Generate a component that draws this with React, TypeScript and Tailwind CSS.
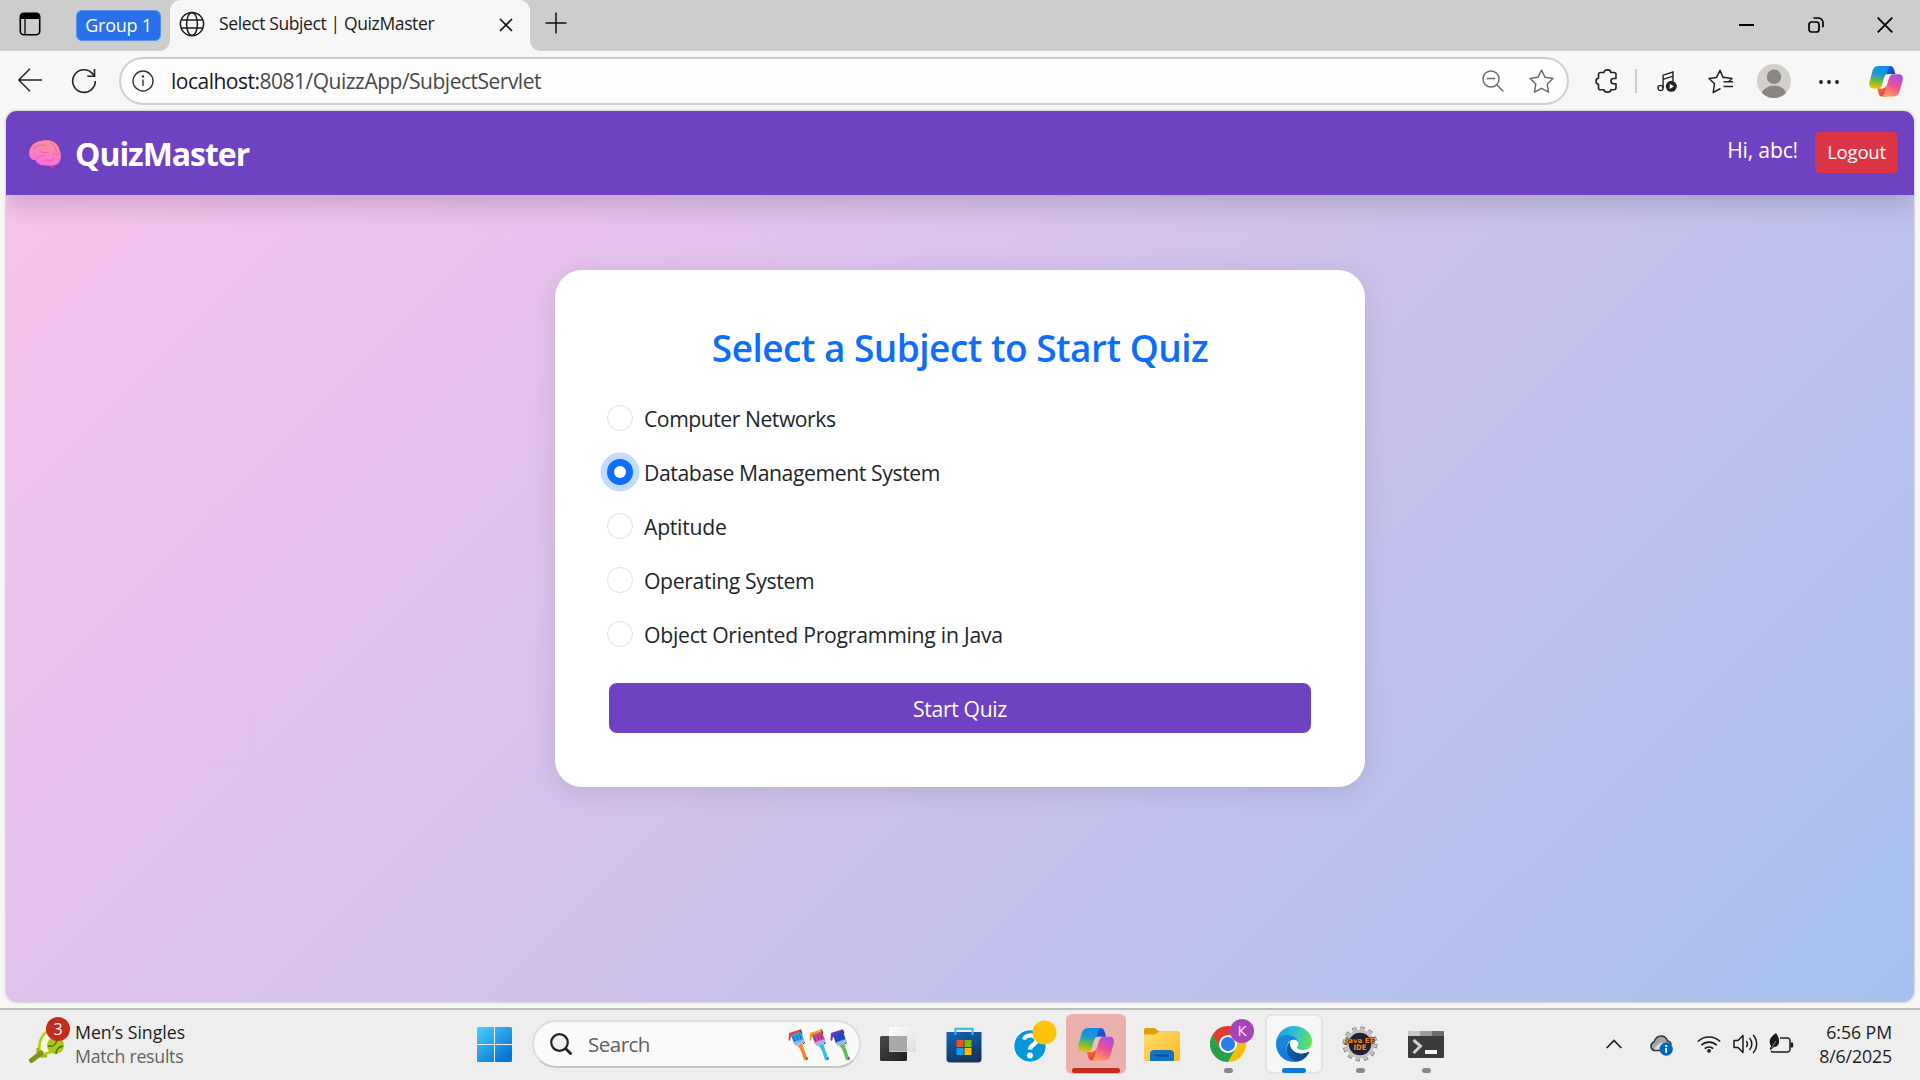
import React from "react";

type SvgProps = { className?: string };

function CopilotIcon({ className = "w-[35px] h-[32px]", id, gap }: SvgProps & { id: string; gap: string }) {
  return (
    <svg viewBox="0 0 36 33" className={className}>
      <defs>
        <linearGradient id={id + "a"} x1="0.4" y1="0" x2="0.2" y2="1">
          <stop offset="0" stopColor="#0f8fe8" />
          <stop offset="0.35" stopColor="#1a9bd0" />
          <stop offset="0.65" stopColor="#6fbb3c" />
          <stop offset="1" stopColor="#f5c400" />
        </linearGradient>
        <linearGradient id={id + "b"} x1="0.8" y1="0" x2="0.3" y2="1">
          <stop offset="0" stopColor="#a34dea" />
          <stop offset="0.5" stopColor="#ee5091" />
          <stop offset="1" stopColor="#ffa25c" />
        </linearGradient>
        <linearGradient id={id + "c"} x1="0" y1="0" x2="1" y2="1">
          <stop offset="0" stopColor="#1565dd" />
          <stop offset="1" stopColor="#1b3fc0" />
        </linearGradient>
        <linearGradient id={id + "d"} x1="0" y1="0" x2="0.6" y2="1">
          <stop offset="0" stopColor="#ff8a3c" />
          <stop offset="1" stopColor="#e8383d" />
        </linearGradient>
      </defs>
      <path d="M17 0h5.500c2.500 0 3.600 1.800 4.300 4.200L28 8.800h-5c-3 0-5 .5-6 2.500z" fill={`url(#${id}c)`} />
      <path d="M19 32.500h-5c-2.500 0-3.400-1.800-4-4l-1.300-4.700h4.600c3 0 4-1.500 5-4.500z" fill={`url(#${id}d)`} />
      <path d="M10.500 0H24c-2.800 0-3.700 2.500-4.600 5.500l-4 13.500c-1 3.200-2.600 5-5.500 5H4.700C.5 24-.7 20.500.5 16.300l3.300-11.500C4.800 1.500 7 0 10.500 0z" fill={`url(#${id}a)`} />
      <path d="M25.500 32.500H12.500c2.500 0 3.600-2.300 4.500-5.300l3.900-13.400c1-3.300 2.500-5 5.500-5h5.100c4.200 0 5.200 3.500 4 7.700l-3.300 11.200c-1 3.300-3.300 4.800-6.700 4.800z" fill={`url(#${id}b)`} />
      <path d="M18.500 8.800h5.500c-2 .5-2.900 2-3.500 4l-2.100 7c-.8 2.600-1.900 4-4.400 4.200h-3.500c1.700-.4 2.500-1.600 3.100-3.600l2.200-7.400c.5-1.900 1.300-3.500 2.700-4.200z" fill={gap} />
    </svg>
  );
}

function BrainIcon() {
  return (
    <svg viewBox="0 0 32 30" className="mt-[3px] h-[30px] w-[32px]">
      <defs>
        <linearGradient id="brain" x1="0.6" y1="0" x2="0.4" y2="1">
          <stop offset="0" stopColor="#ff8f95" />
          <stop offset="0.55" stopColor="#fb7fc0" />
          <stop offset="1" stopColor="#fb68e4" />
        </linearGradient>
      </defs>
      <path d="M20 24h5l-.3 4.500c-.6.700-1.600.4-2.200-.5z" fill="#e0358f" />
      <path d="M13.500.8C6.500 1 .4 6 .2 13c-.2 4.500 2.500 7 6.300 7.300 1.500 3.500 4.500 5 8 5 3.500.6 9 .7 12-.3 4-1.300 5.500-5.500 5.300-9.500C31.500 7 26 .300 18.500.300 16.500.200 15 .300 13.500.800z" fill="url(#brain)" />
      <path d="M4.500 9c3.500-4 7.500-5 12-3M10.500 10c2 3 6 3.500 9 2M21.500 2.500c3 2 5.500 5.500 6 9M7 19.500c1.500-3.500 5-4.500 8-3.500M18 20c3 1 6 0 8-2M24 13.500c2 1 4 1 6 0" fill="none" stroke="#e0568f" strokeOpacity="0.750" strokeWidth="0.900" strokeLinecap="round" />
    </svg>
  );
}

function TabStrip() {
  return (
    <div className="flex h-[51px] shrink-0 bg-[#cdcdcd]">
      <div className="flex w-[170px] items-center">
        <svg viewBox="0 0 22 24" className="ml-[19px] mb-[3px] h-[24px] w-[22px]">
          <rect x="1.300" y="1.300" width="19.400" height="21.400" rx="3.500" fill="none" stroke="#000" strokeWidth="1.600" />
          <path d="M1 7V4.500A3.500 3.500 0 0 1 4.500 1h13A3.500 3.500 0 0 1 21 4.500V7z" />
          <path d="M6 7v15.500" stroke="#000" strokeWidth="1.300" />
        </svg>
        <div className="ml-[35px] flex h-[31px] w-[85px] items-center justify-center rounded-[6px] border border-[#5a92f0] bg-[#2a70ec] text-[18px] tracking-[-0.27px] text-white">
          Group 1
        </div>
      </div>
      <div className="relative flex w-[360px] items-center rounded-t-[11px] bg-[#f7f7f7]">
        <span className="absolute bottom-0 -left-[10px] h-[10px] w-[10px] bg-[radial-gradient(circle_at_0_0,#cdcdcd_9.500px,#f7f7f7_10px)]" />
        <span className="absolute bottom-0 -right-[10px] h-[10px] w-[10px] bg-[radial-gradient(circle_at_100%_0,#cdcdcd_9.500px,#f7f7f7_10px)]" />
        <svg viewBox="0 0 26 26" className="mb-[3px] ml-[9px] h-[26px] w-[26px]" fill="none" stroke="#1b1b1b" strokeWidth="1.500">
          <circle cx="13" cy="13" r="11.600" />
          <ellipse cx="13" cy="13" rx="5.400" ry="11.600" />
          <path d="M2.300 9h21.400M2.300 17h21.400" />
        </svg>
        <span className="ml-[14px] pb-[4px] text-[17.5px] tracking-[-0.38px] whitespace-nowrap text-[#1b1b1b]">Select Subject | QuizMaster</span>
        <svg viewBox="0 0 14 14" className="mb-px ml-auto mr-[17px] h-[14px] w-[14px]" stroke="#111" strokeWidth="1.700">
          <path d="M1 1l12 12M13 1L1 13" />
        </svg>
      </div>
      <svg viewBox="0 0 22 22" className="mt-[12px] ml-[15px] h-[22px] w-[22px]" stroke="#111" strokeWidth="1.500">
        <path d="M11 .5v21M.5 11h21" />
      </svg>
      <div className="ml-auto flex items-center pr-[27px]">
        <span className="mb-px h-[2px] w-[15px] bg-black" />
        <svg viewBox="0 0 16 16" className="mb-px ml-[54px] h-[16px] w-[16px]" fill="none" stroke="#000" strokeWidth="1.700">
          <rect x="1" y="5" width="10" height="10" rx="2.500" />
          <path d="M5.500 1h4.800A4.700 4.700 0 0 1 15 5.700v4.500" />
        </svg>
        <svg viewBox="0 0 16 16" className="mb-px ml-[53px] h-[16px] w-[16px]" stroke="#000" strokeWidth="1.800">
          <path d="M.7.7l14.600 14.600M15.300.7L.7 15.300" />
        </svg>
      </div>
    </div>
  );
}

function AddressBar() {
  return (
    <div className="flex h-[60px] shrink-0 items-center bg-[#f7f7f7]">
      <svg viewBox="0 0 24 24" className="ml-[18px] mb-[2px] h-[24px] w-[24px]" fill="none" stroke="#222" strokeWidth="1.500">
        <path d="M24 12H1M12 .8L.8 12 12 23.200" />
      </svg>
      <svg viewBox="0 0 26 26" className="ml-[29px] h-[26px] w-[26px]" fill="none" stroke="#222" strokeWidth="1.600">
        <path d="M24.300 13A11.300 11.300 0 1 1 21.300 5.400L23.300 7.800" />
        <path d="M23.500 1v7.200h-7.200" />
      </svg>
      <div className="ml-[22px] flex h-[48px] w-[1450px] items-center rounded-full border-2 border-[#cfcfcf] bg-[#fdfdfd]">
        <svg viewBox="0 0 22 22" className="ml-[11px] h-[22px] w-[22px]" fill="none" stroke="#333" strokeWidth="1.400">
          <circle cx="11" cy="11" r="10" />
          <path d="M11 9.500v6.500" />
          <circle cx="11" cy="6.500" r="0.600" fill="#333" />
        </svg>
        <span className="ml-[17px] pt-[1px] text-[21px] tracking-[-0.5px] text-[#484848]">
          <span className="text-[#1b1b1b]">localhost:</span>8081/QuizzApp/SubjectServlet
        </span>
        <svg viewBox="0 0 22 22" className="ml-auto h-[22px] w-[22px]" fill="none" stroke="#6a6a6a" strokeWidth="1.500">
          <circle cx="9" cy="9" r="8" />
          <path d="M5 8.500h8M14.700 14.700L21.500 21.500" />
        </svg>
        <svg viewBox="0 0 24 24" className="mr-[13px] ml-[25px] h-[25px] w-[25px]" fill="none" stroke="#6a6a6a" strokeWidth="1.400" strokeLinejoin="round">
          <path d="M12 1l3.400 7 7.600 1.100-5.500 5.400 1.300 7.700-6.800-3.600-6.800 3.600 1.300-7.700L1 9.100 8.600 8z" />
        </svg>
      </div>
      <svg viewBox="0 0 22 24" className="ml-[26px] h-[24px] w-[22px]" fill="none" stroke="#222" strokeWidth="1.600" strokeLinejoin="round">
        <path d="M5.500 3.500H9C9 1.800 10.200.9 12.500.9S15.800 1.800 15.800 3.500h3.300A2 2 0 0 1 21 5.500v4h-2.500a2.500 2.500 0 0 0 0 5.200H21v4a2 2 0 0 1-1.900 2h-3.300c0 1.600-1.200 2.400-3.300 2.400S9 22.300 9 20.700H5.500a2 2 0 0 1-2-2v-3.500C1.800 15 1 13.900 1 12.200s.8-2.900 2.500-3.100V5.500a2 2 0 0 1 2-2z" />
      </svg>
      <span className="ml-[18px] h-[24px] w-[2px] bg-[#cfcfcf]" />
      <svg viewBox="0 0 20 21" className="ml-[20px] h-[21px] w-[20px]" fill="none" stroke="#222" strokeWidth="1.400">
        <circle cx="3.500" cy="17" r="2.600" />
        <path d="M6.100 17V4.200L16 1v9M6.100 8.400L16 5.200" />
        <circle cx="14.300" cy="15.300" r="5.500" fill="#222" stroke="none" />
        <path d="M12.700 12.700v5.200l4.200-2.600z" fill="#fff" stroke="none" />
      </svg>
      <svg viewBox="0 0 25 25" className="ml-[31px] h-[25px] w-[25px]" fill="none" stroke="#222" strokeWidth="1.500" strokeLinejoin="round">
        <path d="M17 8.800l-2-.4-3-7-3.400 7L1 9.500l5.500 5.200L5.200 23.500 12.500 19.500M15.500 8.200l8.500 1.300-3 2.700M15.500 12.700H25M15.500 17.500H25" />
      </svg>
      <svg viewBox="0 0 34 34" className="ml-[24px] h-[34px] w-[34px]">
        <clipPath id="avatar"><circle cx="17" cy="17" r="17" /></clipPath>
        <g clipPath="url(#avatar)">
          <rect width="34" height="34" fill="#d2d0cd" />
          <circle cx="17" cy="12.800" r="7.200" fill="#8a8683" />
          <ellipse cx="17" cy="31.500" rx="12.500" ry="10" fill="#8a8683" />
        </g>
      </svg>
      <svg viewBox="0 0 20 4" className="ml-[28px] mt-px h-[4px] w-[20px]" fill="#222">
        <circle cx="2" cy="2" r="1.900" /><circle cx="10" cy="2" r="1.900" /><circle cx="18" cy="2" r="1.900" />
      </svg>
      <CopilotIcon id="toolbar" gap="#f7f7f7" className="ml-[30px] h-[31px] w-[34px]" />
    </div>
  );
}

const subjects = [
  { name: "Computer Networks", track: "tracking-[-0.48px]", selected: false },
  { name: "Database Management System", track: "tracking-[-0.41px]", selected: true },
  { name: "Aptitude", track: "tracking-[-0.27px]", selected: false },
  { name: "Operating System", track: "tracking-[-0.36px]", selected: false },
  { name: "Object Oriented Programming in Java", track: "tracking-[-0.25px]", selected: false },
];

function QuizPage() {
  return (
    <div className="mx-[6px] flex h-[891px] shrink-0 flex-col overflow-hidden rounded-[11px] bg-[linear-gradient(135deg,#fbc2eb_0%,#a6c1ee_100%)] shadow-[0_0_3px_rgba(0,0,0,0.3)]">
      <nav className="flex h-[84px] shrink-0 items-center bg-[#6f42c1] pr-[16px] pl-[23px] shadow-[0_11px_22px_rgba(0,0,0,0.15)]">
        <BrainIcon />
        <span className="ml-[14px] pt-[2px] text-[32px] font-bold tracking-[-1.05px] text-white">QuizMaster</span>
        <span className="ml-auto pb-[7px] text-[21.2px] tracking-[-0.2px] text-white">Hi, abc!</span>
        <span className="mb-[2px] ml-[17px] flex h-[41px] w-[83px] items-center justify-center rounded-[5px] bg-[#dc3545] text-[18.6px] tracking-[-0.25px] text-white">Logout</span>
      </nav>
      <main className="mx-auto mt-[75px] flex h-[517px] w-[810px] flex-col rounded-[27px] bg-white px-[54px] shadow-[0_5px_27px_rgba(0,0,0,0.1)]">
        <h3 className="mt-[53px] text-center text-[37px] leading-[50px] font-semibold tracking-[-0.53px] whitespace-nowrap text-[#0d6efd]">
          Select a Subject to Start Quiz
        </h3>
        <div className="mt-[18px]">
          {subjects.map((s) => (
            <label key={s.name} className="flex h-[54px] items-center">
              {s.selected ? (
                <span className="-ml-[2px] flex h-[26px] w-[26px] items-center justify-center rounded-full bg-[#0d6efd] shadow-[0_0_0_6.5px_#c2dbfe]">
                  <span className="h-[12px] w-[12px] rounded-full bg-white" />
                </span>
              ) : (
                <span className="-ml-[2px] h-[26px] w-[26px] rounded-full border border-[#dee2e6] bg-white" />
              )}
              <span className={"ml-[11px] pt-[2px] text-[21.2px] text-[#212529] " + s.track}>{s.name}</span>
            </label>
          ))}
        </div>
        <button className="mt-[22px] h-[50px] w-full rounded-[8px] bg-[#6f42c1] pt-px text-[21.2px] tracking-[-0.35px] text-white">Start Quiz</button>
      </main>
    </div>
  );
}

function Racket() {
  return (
    <svg viewBox="0 0 36 36" className="h-[36px] w-[36px]">
      <path d="M11 25C8 14 14 4 22 2c9-2 12 8 7 16-3 5-9 7-14 8z" fill="#f5f7e0" stroke="#bccb12" strokeWidth="2.600" />
      <path d="M9 20v8h9" fill="none" stroke="#a3b40c" strokeWidth="3" />
      <path d="M2.500 32.500L12 25" stroke="#7f9413" strokeWidth="5" strokeLinecap="round" />
      <circle cx="26.500" cy="17.500" r="8.500" fill="#a9c80e" />
      <path d="M19 18c5 1 9-1 9-9M27 26c0-4 2-7 7-8" fill="none" stroke="#4d6b12" strokeWidth="1.300" />
    </svg>
  );
}

function Brush({ tip, bristle, handle }: { tip: string; bristle: string; handle: string }) {
  return (
    <svg viewBox="0 0 20 32" className="h-[32px] w-[20px]">
      <path d="M1 4L12 .5l2 3.500L3 8 2 12 .5 11z" fill={tip} />
      <path d="M3 6l10-3.500 3 8.500-10 4z" fill={bristle} />
      <path d="M5 7l1.500 5M8.500 6l1.500 5M11.500 5l1.500 5" stroke="#1c3f8c" strokeWidth="0.800" />
      <path d="M5.800 13.500l10-3.500 1 3.500-9.500 3.500z" fill="#9fb6ee" />
      <path d="M9 16.500l5.500-2c0 3 4 11 4.500 15 0 2-2.500 2.500-3.500.5-1-3.500-2.500-11-6.500-13.500z" fill={handle} />
      <path d="M12.500.500l1.500 4M16.800 13.500l-2 1.500M19 28v3" stroke="#222" strokeWidth="1" />
    </svg>
  );
}

function Slot({ children, dot = false }: { children: React.ReactNode; dot?: boolean }) {
  return (
    <div className="relative flex h-[70px] w-[66px] items-center justify-center pb-[2px]">
      {children}
      {dot && <span className="absolute bottom-[7px] left-[29px] h-[5px] w-[9px] rounded-full bg-[#888]" />}
    </div>
  );
}

function TaskbarApps() {
  return (
    <div className="ml-[4px] flex">
      <Slot>
        <svg viewBox="0 0 36 34" className="h-[34px] w-[36px]">
          <defs>
            <linearGradient id="tv1" x1="0" y1="0" x2="1" y2="1"><stop stopColor="#4a4a4a" /><stop offset="1" stopColor="#1d1d1d" /></linearGradient>
            <linearGradient id="tv2" x1="0" y1="0" x2="1" y2="1"><stop stopColor="#fff" /><stop offset="1" stopColor="#dedede" /></linearGradient>
          </defs>
          <rect x="0" y="9" width="27" height="25" rx="1.500" fill="url(#tv1)" />
          <rect x="9" y="0" width="27" height="25" rx="1.500" fill="url(#tv2)" />
          <path d="M9 9h18v15.500H9z" fill="#a9a9a9" />
        </svg>
      </Slot>
      <Slot>
        <svg viewBox="0 0 36 36" className="mt-px mr-px h-[36px] w-[36px]">
          <defs><linearGradient id="store" x1="0" y1="0" x2="0.400" y2="1"><stop stopColor="#0f66b8" /><stop offset="1" stopColor="#15375f" /></linearGradient></defs>
          <path d="M.5 5h35V32a3.500 3.500 0 0 1-3.500 3.500H4A3.500 3.500 0 0 1 .5 32z" fill="url(#store)" />
          <path d="M9.500 8V1.800h17V8" fill="none" stroke="#35b8f1" strokeWidth="2" />
          <path d="M10.500 13h7v7h-7z" fill="#f25022" /><path d="M18.500 13h7v7h-7z" fill="#7fba00" />
          <path d="M10.500 21h7v7h-7z" fill="#00a4ef" /><path d="M18.500 21h7v7h-7z" fill="#ffb900" />
        </svg>
      </Slot>
      <Slot>
        <svg viewBox="0 0 44 44" className="mb-[5px] ml-[9px] h-[44px] w-[44px]">
          <circle cx="17" cy="26" r="16.300" fill="#0598d8" stroke="#fff" strokeWidth="1.200" />
          <path d="M11 19.500c1-5 11.500-6 12.500.3.600 5-6.500 4.700-6.500 9.700" fill="none" stroke="#fff" strokeWidth="4.300" />
          <circle cx="17" cy="35.500" r="2.900" fill="#fff" />
          <circle cx="31.500" cy="12.500" r="12" fill="#ffc20e" />
        </svg>
      </Slot>
      <Slot>
        <div className="relative flex h-[60px] w-[60px] items-center justify-center rounded-[6px] bg-[#e9b0ac]">
          <CopilotIcon id="taskbar" gap="#ecc2bf" className="h-[33px] w-[36px]" />
          <span className="absolute bottom-px left-[6px] h-[5px] w-[48px] rounded-full bg-[#c42b1c]" />
        </div>
      </Slot>
      <Slot>
        <svg viewBox="0 0 36 33" className="h-[33px] w-[36px]">
          <defs><linearGradient id="folder" x1="0" y1="0" x2="1" y2="1"><stop stopColor="#ffdc70" /><stop offset="1" stopColor="#fbb91c" /></linearGradient></defs>
          <path d="M0 2a2 2 0 0 1 2-2h9l4 3.500H34a2 2 0 0 1 2 2V12H0z" fill="#dfa00c" />
          <path d="M0 6.500h11l4-2.500h21v27a2 2 0 0 1-2 2H2a2 2 0 0 1-2-2z" fill="url(#folder)" />
          <path d="M6 33v-7a4 4 0 0 1 4-4h16a4 4 0 0 1 4 4v7z" fill="#1272c6" />
          <path d="M11 27.500h14" stroke="#0b4d90" strokeWidth="2" />
        </svg>
      </Slot>
      <Slot dot>
        <svg viewBox="0 0 48 48" className="h-[36px] w-[36px]">
          <path d="M24 12h20.800A24 24 0 0 1 24 48l10.400-18z" fill="#fbbc05" />
          <path d="M3.200 12A24 24 0 0 1 44.800 12H24L13.600 30z" fill="#e33b2e" />
          <path d="M3.200 12L13.600 30 24 36l10.400-6L24 48A24 24 0 0 1 3.200 12z" fill="#28a04a" />
          <circle cx="24" cy="24" r="12" fill="#fff" />
          <circle cx="24" cy="24" r="9.500" fill="#2f7ced" />
        </svg>
        <span className="absolute top-[9px] left-[35px] flex h-[24px] w-[24px] items-center justify-center rounded-full bg-[#a745b8] font-['DejaVu_Sans'] text-[14px] text-[#f1dff4]">K</span>
      </Slot>
      <Slot>
        <div className="relative flex h-[60px] w-[58px] items-center justify-center rounded-[7px] border-2 border-[#e4e4e4] bg-[#f7f7f7]">
          <svg viewBox="0 0 36 36" className="h-[36px] w-[36px] shrink-0">
            <defs>
              <linearGradient id="edgeTop" x1="0" y1="0.400" x2="1" y2="0.600"><stop stopColor="#1a9de0" /><stop offset="0.500" stopColor="#2fc2d4" /><stop offset="1" stopColor="#67e34b" /></linearGradient>
              <linearGradient id="edgeLeft" x1="0.200" y1="0" x2="0.600" y2="1"><stop stopColor="#1b8ad8" /><stop offset="1" stopColor="#0a7be0" /></linearGradient>
              <linearGradient id="edgeDark" x1="0" y1="0.500" x2="1" y2="0.600"><stop stopColor="#0d5cab" /><stop offset="1" stopColor="#0c4a86" /></linearGradient>
            </defs>
            <path d="M0 17C.8 7 8.500 0 18 0c10.500 0 18 7.500 18 15.500 0 5.500-4 8.500-9 8.500-4 0-6.500-1-6.500-2.500 0-1 1.700-1.800 1.700-4.500C22.200 12.500 17 9 11 9 6 9 1.500 12 0 17z" fill="url(#edgeTop)" />
            <path d="M0 18C0 12 5 8.800 11 8.800c6.500 0 11.200 3.700 11.200 8.200-1-2.500-3-3.300-4.700-3.300-4 0-7 4.300-7 9.300 0 6 4 11 9.500 12.900C8 37 0 28 0 18z" fill="url(#edgeLeft)" />
            <path d="M15 15c-3 2-4.500 5-4.500 8.500 0 6.500 5 12 10.500 12.200 5-.7 9.500-4 12-8.700.5-1-.3-1.500-1.200-1-5.500 3-17.300 1.500-17.300-7.500 0-1.300.2-2.500.5-3.500z" fill="url(#edgeDark)" />
            <path d="M13.800 18.300c0-2.800 1.800-4.500 4.200-4.500 2.800 0 4.600 2.200 4.300 4.500-.2 1.300-1.400 2-1.400 3.300 0 1.500 2.300 2.600 6 2.600 3 0 5.500-.7 7.500-2.400l-1.600 3.800c-4 2-9.500 2.300-13.500-.2-3-1.900-5.500-4.100-5.500-7.100z" fill="#f7f7f7" />
          </svg>
          <span className="absolute -bottom-[1px] left-[15px] h-[5px] w-[24px] rounded-full bg-[#0f7ad6]" />
        </div>
      </Slot>
      <Slot dot>
        <svg viewBox="0 0 36 36" className="h-[36px] w-[36px]">
          <circle cx="18" cy="18" r="15.500" fill="none" stroke="#777" strokeWidth="4" strokeDasharray="4.060 4.060" />
          <circle cx="18" cy="18" r="15.300" fill="none" stroke="#c4c4c4" strokeWidth="3" strokeDasharray="3 5.010" strokeDashoffset="-0.500" />
          <circle cx="18" cy="18" r="12.800" fill="#25202f" stroke="#c4c4c4" strokeWidth="3" />
          <text x="18" y="16.500" textAnchor="middle" fontSize="7" fontWeight="700" fill="#f58a1f" stroke="#1a1010" strokeWidth="1" paintOrder="stroke" fontFamily="DejaVu Sans" textLength="29" lengthAdjust="spacingAndGlyphs">Java EE</text>
          <text x="18" y="24" textAnchor="middle" fontSize="7.500" fontWeight="700" fill="#f58a1f" fontFamily="DejaVu Sans" textLength="13" lengthAdjust="spacingAndGlyphs">IDE</text>
        </svg>
      </Slot>
      <Slot dot>
        <svg viewBox="0 0 36 27" className="h-[27px] w-[36px]">
          <rect width="36" height="27" rx="1.500" fill="#3a3a3a" />
          <path d="M0 5V1.500A1.500 1.500 0 0 1 1.500 0H12v5z" fill="#c9c9c9" /><path d="M12 0h12v5H12z" fill="#9a9a9a" /><path d="M24 0h10.500A1.500 1.500 0 0 1 36 1.500V5H24z" fill="#6c6c6c" />
          <path d="M5.500 9l7 6-7 7" fill="none" stroke="#cfcfcf" strokeWidth="3" />
          <rect x="17" y="19" width="12" height="4" fill="#f2f2f2" />
        </svg>
      </Slot>
    </div>
  );
}

function Tray() {
  return (
    <div className="mr-[28px] mb-[2px] ml-auto flex items-center">
      <svg viewBox="0 0 16 10" className="h-[10px] w-[16px]" fill="none" stroke="#1b1b1b" strokeWidth="1.700"><path d="M.7 9L8 1.500 15.300 9" /></svg>
      <svg viewBox="0 0 24 21" className="ml-[27px] mt-[3px] h-[21px] w-[24px]">
        <path d="M5 15.500a4.500 4.500 0 0 1 0-8.500C6.500 3 9 1 12 1s5.500 1.500 6.500 5c2 .3 3.500 2 3.500 4" fill="#a6a6a6" stroke="#333" strokeWidth="1.500" />
        <path d="M5 15.500c1-4.500 5-7.500 9-8l-3 8z" fill="#dcdcdc" />
        <path d="M4.500 15.500h7" stroke="#333" strokeWidth="1.500" />
        <circle cx="17.200" cy="14.200" r="6.600" fill="#0067c0" />
        <path d="M17.200 13v4.800M17.200 10v2" stroke="#fff" strokeWidth="1.800" />
      </svg>
      <svg viewBox="0 0 24 18" className="ml-[24px] h-[18px] w-[24px]" fill="none" stroke="#1b1b1b" strokeWidth="1.600">
        <path d="M.8 6.500a16 16 0 0 1 22.400 0M4.300 10.300a11 11 0 0 1 15.400 0M7.700 13.700a6.200 6.200 0 0 1 8.600 0" />
        <circle cx="12" cy="15.800" r="1.900" fill="#1b1b1b" stroke="none" />
      </svg>
      <svg viewBox="0 0 25 20" className="ml-[12px] h-[20px] w-[25px]" fill="none" stroke="#1b1b1b" strokeWidth="1.500" strokeLinejoin="round">
        <path d="M1 6.500h4L10 1.500v17l-5-5H1zM13.300 7a5 5 0 0 1 0 6M16.500 4a9 9 0 0 1 0 12M20 1a13 13 0 0 1 0 18" />
      </svg>
      <svg viewBox="0 0 25 20" className="mb-[3px] ml-[11px] h-[20px] w-[25px]">
        <path d="M11 5h7.500A2.500 2.500 0 0 1 21 7.500v9a2.500 2.500 0 0 1-2.500 2.500H4a2.500 2.500 0 0 1-2-1" fill="none" stroke="#1b1b1b" strokeWidth="1.500" />
        <path d="M21.500 9.500h1.500a1.200 1.200 0 0 1 1.200 1.200v2.600A1.200 1.200 0 0 1 23 14.500h-1.500z" fill="#1b1b1b" />
        <path d="M7 0c2 3 3.500 5.500 3 9.500-.4 3-2.500 4.500-5 4.500l-3.500 3-.8-.8L2 13C-.5 9 0 4.500 7 0z" fill="#1b1b1b" />
        <path d="M2.500 15L7 8" stroke="#ddd" strokeWidth="0.500" />
      </svg>
      <div className="flex w-[98px] flex-col items-end text-[17.7px] leading-[24px] text-[#1b1b1b]">
        <span className="tracking-[-0.05px]">6:56 PM</span>
        <span className="tracking-[-0.1px]">8/6/2025</span>
      </div>
    </div>
  );
}

function Taskbar() {
  return (
    <div className="flex h-[72px] shrink-0 items-center border-t-2 border-[#bcbcbc] bg-[#eee]">
      <div className="flex w-[477px] items-center pb-[2px]">
        <div className="relative ml-[29px] h-[48px] w-[46px]">
          <div className="pt-[8px]"><Racket /></div>
          <span className="absolute -top-[3px] left-[17px] flex h-[24px] w-[24px] items-center justify-center rounded-full bg-[#c42b1c] pb-px text-[16px] text-white">3</span>
        </div>
        <div className="text-[17.7px] leading-[24px]">
          <div className="tracking-[0px] text-[#1b1b1b]">Men’s Singles</div>
          <div className="tracking-[-0.25px] text-[#626262]">Match results</div>
        </div>
      </div>
      <svg viewBox="0 0 35 35" className="mb-px h-[35px] w-[35px]">
        <defs><linearGradient id="win" gradientUnits="userSpaceOnUse" x1="0" y1="0" x2="28" y2="32"><stop stopColor="#4ccfff" /><stop offset="1" stopColor="#0576d4" /></linearGradient></defs>
        <path d="M1.500 0H17v17H0V1.500A1.500 1.500 0 0 1 1.500 0zM18 0h15.500A1.500 1.500 0 0 1 35 1.500V17H18zM0 18h17v17H1.500A1.500 1.500 0 0 1 0 33.500zM18 18h17v15.500a1.500 1.500 0 0 1-1.500 1.500H18z" fill="url(#win)" />
      </svg>
      <div className="mb-[2px] ml-[20px] flex h-[48px] w-[329px] items-center rounded-full border-2 border-[#dedede] border-b-[#c6c6c6] bg-[#fafafa]">
        <svg viewBox="0 0 22 22" className="ml-[16px] h-[22px] w-[22px]" fill="#f0f0f0" stroke="#222" strokeWidth="2.200">
          <circle cx="9.500" cy="9.500" r="8.300" /><path d="M15.500 15.500L21.500 21.500" strokeWidth="2.800" />
        </svg>
        <span className="ml-[16px] text-[20.5px] tracking-[-0.5px] text-[#616161]">Search</span>
        <div className="mt-[2px] mr-[9px] ml-auto flex gap-[1px]">
          <Brush tip="#e8452c" bristle="#25a7ee" handle="#f58a2a" />
          <Brush tip="#e3a51a" bristle="#e93c92" handle="#37bdf4" />
          <Brush tip="#7b2cbf" bristle="#1f4fc4" handle="#5cc05a" />
        </div>
      </div>
      <TaskbarApps />
      <Tray />
    </div>
  );
}

export default function App() {
  return (
    <div className="flex h-[1080px] w-[1920px] flex-col overflow-hidden bg-[#f7f7f7] font-['Open_Sans',sans-serif]">
      <TabStrip />
      <AddressBar />
      <QuizPage />
      <div className="h-[6px] shrink-0" />
      <Taskbar />
    </div>
  );
}
